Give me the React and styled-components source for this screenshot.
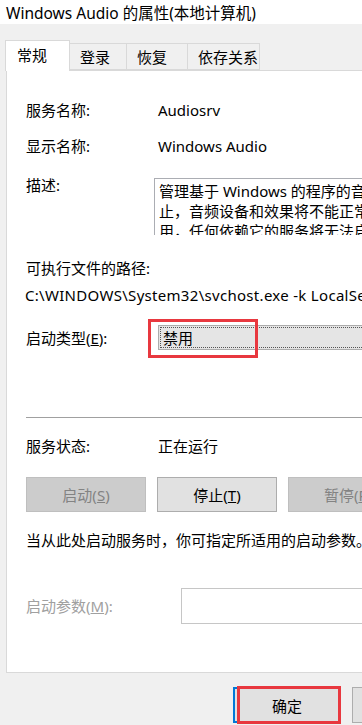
import React from 'react';
import styled, { createGlobalStyle } from 'styled-components';

const Global = createGlobalStyle`
  html, body {
    margin: 0;
    padding: 0;
    overflow: hidden;
  }
  body {
    font-family: "Noto Sans", "Noto Sans CJK SC", sans-serif;
    font-size: 15px;
    color: #000;
  }
`

const Dialog = styled.div`
  width: 362px;
  height: 725px;
  background: #f0f0f0;
  overflow: hidden;
  display: flex;
  flex-direction: column;
`

const TitleBar = styled.div`
  height: 24px;
  flex-shrink: 0;
  background: #fff;
  padding-left: 6px;
  display: flex;
  align-items: center;
  font-size: 15.5px;
  white-space: nowrap;
`

const TabStrip = styled.div`
  margin-top: 16px;
  height: 30px;
  flex-shrink: 0;
  padding-left: 5px;
  display: flex;
  align-items: flex-end;
  position: relative;
  z-index: 1;
`

const Tab = styled.div`
  height: ${p => (p.$active ? '31px' : '27px')};
  margin-bottom: ${p => (p.$active ? '-1px' : '0')};
  width: ${p => p.$w}px;
  box-sizing: border-box;
  border: 1px solid #d9d9d9;
  border-bottom: ${p => (p.$active ? 'none' : '1px solid #d9d9d9')};
  border-left: ${p => (p.$first || p.$active ? '1px solid #d9d9d9' : 'none')};
  background: ${p => (p.$active ? '#fff' : '#f0f0f0')};
  display: flex;
  align-items: center;
  padding-left: ${p => (p.$active ? '11px' : '10px')};
  padding-bottom: ${p => (p.$active ? '4px' : '0')};
  font-size: 15px;
  white-space: nowrap;
`

const Panel = styled.div`
  margin-left: 6px;
  width: 420px;
  height: 603px;
  flex-shrink: 0;
  box-sizing: border-box;
  background: #fff;
  border: 1px solid #d9d9d9;
  padding-left: 19px;
  display: flex;
  flex-direction: column;
`

const Row = styled.div`
  display: flex;
  align-items: ${p => (p.$top ? 'flex-start' : 'center')};
  margin-top: ${p => p.$mt}px;
  line-height: 20px;
  white-space: nowrap;
`

const Label = styled.div`
  width: 132px;
  flex-shrink: 0;
  color: ${p => (p.$disabled ? '#a0a0a0' : '#000')};
`

const Value = styled.div`
  white-space: nowrap;
`

const TextBox = styled.div`
  margin-top: 3px;
  margin-left: -4px;
  width: 280px;
  height: 57px;
  overflow: hidden;
  box-sizing: border-box;
  border-top: 1px solid #abadb3;
  border-left: 1px solid #abadb3;
  padding: 2px 0 0 4px;
  line-height: 20px;
  font-size: 15px;
  white-space: nowrap;
`

const Line = styled.div`
  margin-top: ${p => p.$mt}px;
  margin-left: ${p => p.$ml || 0}px;
  letter-spacing: ${p => p.$ls || 0}px;
  line-height: 20px;
  white-space: nowrap;
`

const Marked = styled.div`
  position: relative;
`

const RedMark = styled.div`
  position: absolute;
  left: ${p => p.$l}px;
  top: ${p => p.$t}px;
  width: ${p => p.$w}px;
  height: ${p => p.$h}px;
  box-sizing: border-box;
  border: 3px solid #e8383f;
  pointer-events: none;
`

const Select = styled.div`
  width: 260px;
  height: 25px;
  box-sizing: border-box;
  background: #e5e5e5;
  border: 1px solid #acacac;
  padding: 1px;
`

const SelectFocus = styled.div`
  height: 100%;
  box-sizing: border-box;
  border: 1px dotted #555;
  display: flex;
  align-items: center;
  padding-left: 2px;
  font-size: 15px;
`

const Separator = styled.div`
  margin-top: 67px;
  height: 1px;
  background: #a0a0a0;
`

const ButtonRow = styled.div`
  margin-top: 21px;
  display: flex;
  gap: 11px;
`

const Button = styled.div`
  width: 120px;
  height: 35px;
  flex-shrink: 0;
  box-sizing: border-box;
  display: flex;
  align-items: center;
  justify-content: center;
  font-size: 15px;
  background: ${p => (p.$disabled ? '#cccccc' : '#e1e1e1')};
  border: 1px solid ${p => (p.$disabled ? '#bfbfbf' : '#adadad')};
  color: ${p => (p.$disabled ? '#838383' : '#000')};
  white-space: nowrap;
`

const Input = styled.div`
  margin-left: 23px;
  width: 240px;
  height: 36px;
  box-sizing: border-box;
  border: 1px solid #c6c6c6;
  background: #fff;
`

const Footer = styled.div`
  flex: 1;
  display: flex;
  align-items: flex-start;
  padding-top: 14px;
  padding-left: 233px;
  gap: 11px;
`

const FooterButton = styled.div`
  width: 108px;
  height: 36px;
  flex-shrink: 0;
  box-sizing: border-box;
  display: flex;
  align-items: center;
  justify-content: center;
  font-size: 15px;
  background: #e1e1e1;
  border: ${p => (p.$default ? '2px solid #0078d7' : '1px solid #adadad')};
  white-space: nowrap;
`

const tabs = [
  { name: '常规', w: 65 },
  { name: '登录', w: 57 },
  { name: '恢复', w: 61 },
  { name: '依存关系', w: 72 },
]

export default class App extends React.Component {
  render() {
    return (
      <Dialog>
        <Global />
        <TitleBar>Windows Audio 的属性(本地计算机)</TitleBar>

        <TabStrip>
          {tabs.map((tab, index) => (
            <Tab key={tab.name} $w={tab.w} $active={index === 0} $first={index === 0}>
              {tab.name}
            </Tab>
          ))}
        </TabStrip>

        <Panel>
          <Row $mt={29}>
            <Label>服务名称:</Label>
            <Value>Audiosrv</Value>
          </Row>
          <Row $mt={16}>
            <Label>显示名称:</Label>
            <Value>Windows Audio</Value>
          </Row>
          <Row $mt={19} $top>
            <Label>描述:</Label>
            <TextBox>
              <div>管理基于 Windows 的程序的音频。如果此服务被停</div>
              <div>止，音频设备和效果将不能正常工作。如果此服务被禁</div>
              <div>用，任何依赖它的服务将无法启动。</div>
            </TextBox>
          </Row>
          <Line $mt={23}>可执行文件的路径:</Line>
          <Line $mt={7} $ml={-1} $ls={0.3}>C:\WINDOWS\System32\svchost.exe -k LocalServiceNetworkRestricted -p</Line>
          <Row $mt={20}>
            <Label>启动类型(<u>E</u>):</Label>
            <Marked>
              <Select>
                <SelectFocus>禁用</SelectFocus>
              </Select>
              <RedMark $l={-10} $t={-6} $w={110} $h={39} />
            </Marked>
          </Row>
          <Separator />
          <Row $mt={18}>
            <Label>服务状态:</Label>
            <Value>正在运行</Value>
          </Row>
          <ButtonRow>
            <Button $disabled>启动(<u>S</u>)</Button>
            <Button>停止(<u>T</u>)</Button>
            <Button $disabled>暂停(<u>P</u>)</Button>
          </ButtonRow>
          <Line $mt={18}>当从此处启动服务时，你可指定所适用的启动参数。</Line>
          <Row $mt={38}>
            <Label $disabled>启动参数(<u>M</u>):</Label>
            <Input />
          </Row>
        </Panel>

        <Footer>
          <Marked>
            <FooterButton $default>确定</FooterButton>
            <RedMark $l={4} $t={-1} $w={104} $h={38} />
          </Marked>
          <FooterButton>取消</FooterButton>
        </Footer>
      </Dialog>
    )
  }
}
